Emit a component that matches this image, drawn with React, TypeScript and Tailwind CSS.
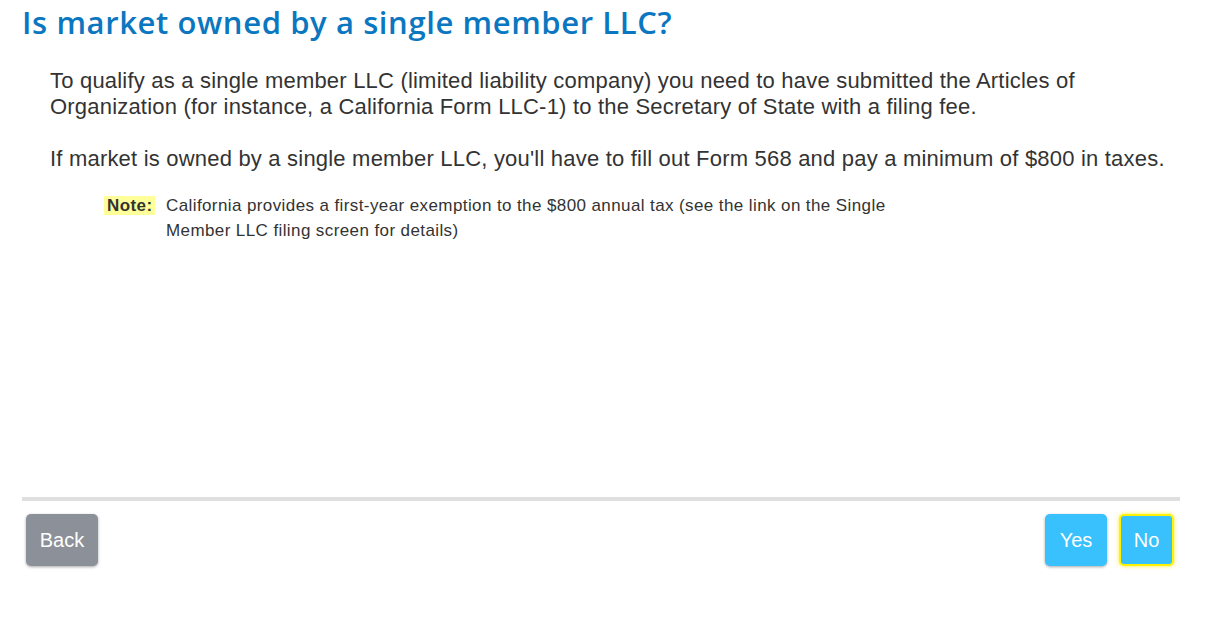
export default function App() {
  return (
    <div className="w-[1209px] h-[619px] bg-white font-['Liberation_Sans',Arial,sans-serif] text-[#333]">
      <div className="pl-[22px] pr-[29px]">
        <h1 className="font-['Open_Sans',sans-serif] text-[31px] leading-[44px] text-[#0a77c0] font-semibold tracking-[0.6px]">
          Is market owned by a single member LLC?
        </h1>
        <div className="pl-[28px] pt-[24px] h-[453px]">
          <p className="text-[22px] leading-[26px] tracking-[0.2px]">
            To qualify as a single member LLC (limited liability company) you need to have submitted the Articles of Organization (for instance, a California Form LLC-1) to the Secretary of State with a filing fee.
          </p>
          <p className="text-[22px] leading-[26px] tracking-[0.2px] mt-[26px]">
            If market is owned by a single member LLC, you'll have to fill out Form 568 and pay a minimum of $800 in taxes.
          </p>
          <div className="flex mt-[21px] pl-[54px] text-[17px] leading-[25px] tracking-[0.4px]">
            <div className="w-[62px] shrink-0">
              <span className="bg-[#ffff99] px-[3px] font-bold text-[#333]">Note:</span>
            </div>
            <p className="w-[740px]">
              California provides a first-year exemption to the $800 annual tax (see the link on the Single Member LLC filing screen for details)
            </p>
          </div>
        </div>
        <div className="h-[4px] bg-[#dfdfdf]" />
        <div className="flex justify-between items-start pt-[13px] px-[4px] pr-[6px]">
          <button className="h-[52px] w-[72px] rounded-[5px] bg-[#8c9098] text-white text-[20px] shadow-[0_1px_3px_rgba(0,0,0,0.35)]">
            Back
          </button>
          <div className="flex gap-[12px]">
            <button className="h-[52px] w-[62px] rounded-[5px] bg-[#38c1fd] text-white text-[20px] shadow-[0_1px_3px_rgba(0,0,0,0.35)]">
              Yes
            </button>
            <button className="h-[52px] w-[55px] rounded-[5px] bg-[#38c1fd] text-white text-[20px] border-2 border-[#fff200] shadow-[0_0_4px_rgba(255,230,0,0.8)]">
              No
            </button>
          </div>
        </div>
      </div>
    </div>
  );
}
